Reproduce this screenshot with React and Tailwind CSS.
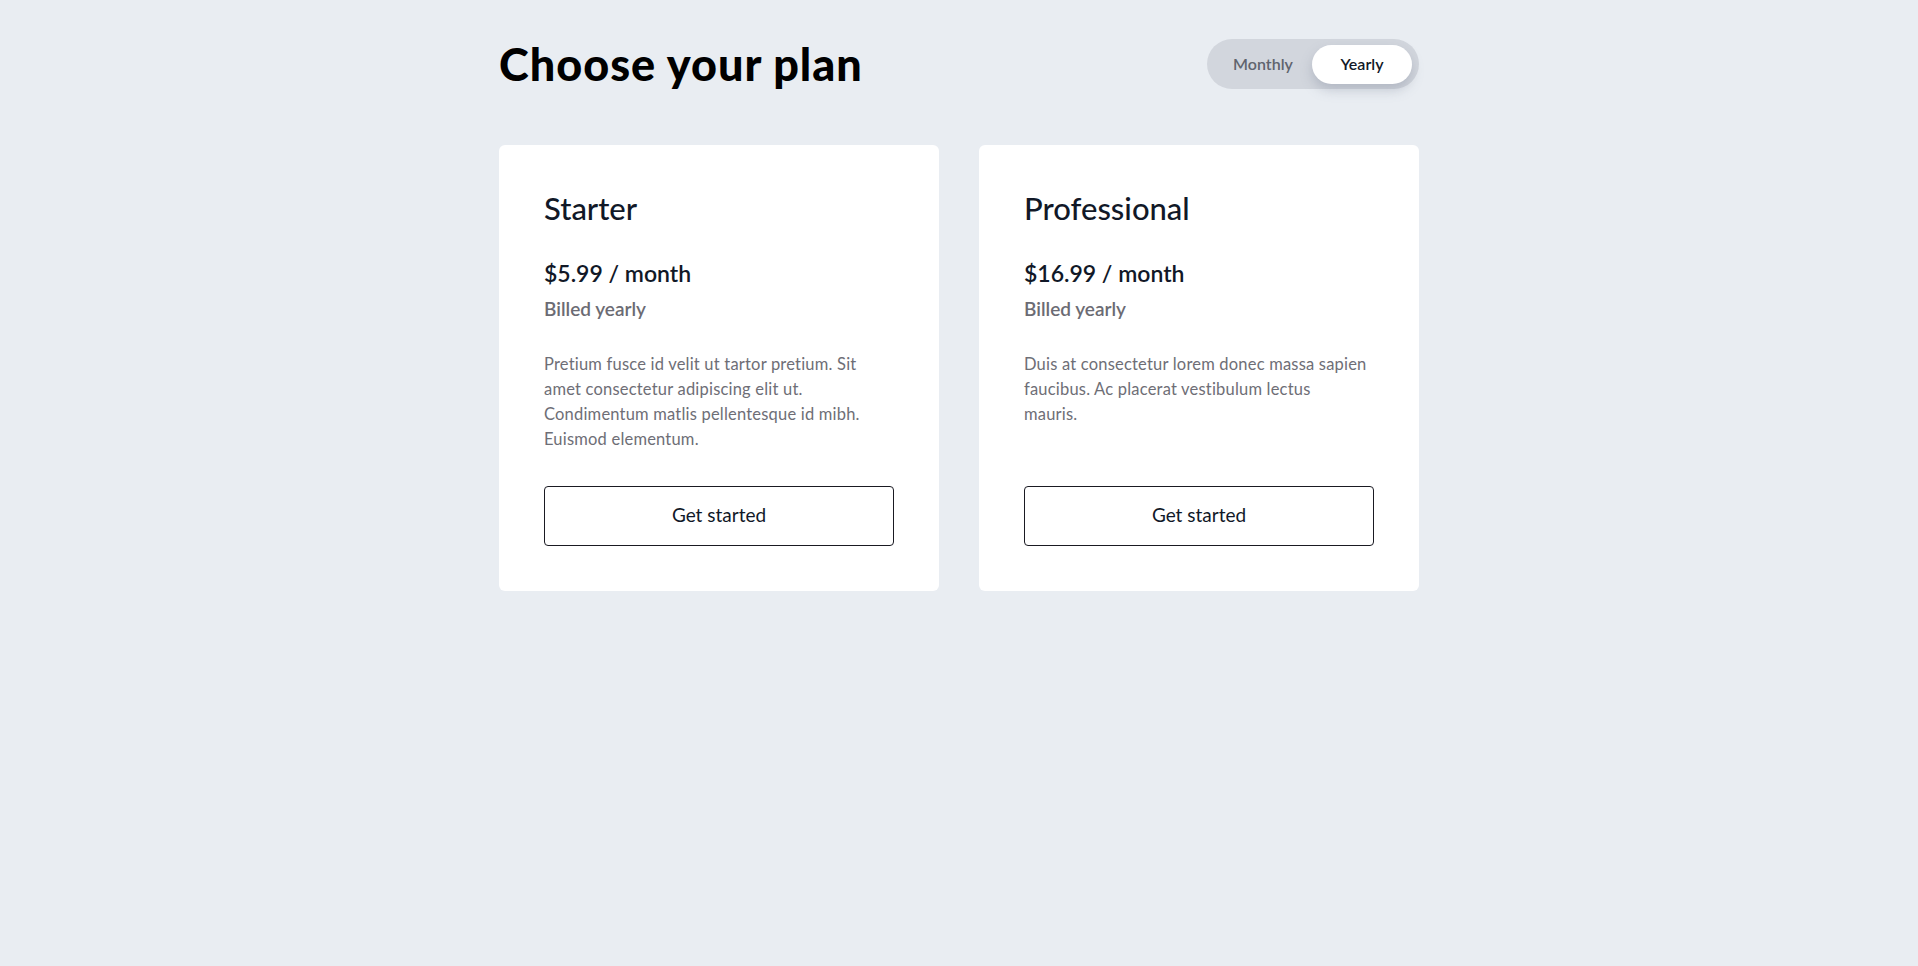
export default function App() {
  const plans = [
    {
      name: "Starter",
      price: "$5.99 / month",
      lines: [
        "Pretium fusce id velit ut tartor pretium. Sit",
        "amet consectetur adipiscing elit ut.",
        "Condimentum matlis pellentesque id mibh.",
        "Euismod elementum.",
      ],
    },
    {
      name: "Professional",
      price: "$16.99 / month",
      lines: [
        "Duis at consectetur lorem donec massa sapien",
        "faucibus. Ac placerat vestibulum lectus",
        "mauris.",
      ],
    },
  ];
  return (
    <div className="min-h-screen bg-[#e9edf2] font-['Lato','Open_Sans',sans-serif]">
      <div className="mx-auto w-[920px] pt-[39px]">
        <div className="flex h-[50px] items-center justify-between">
          <h1 className="text-[45px] font-black leading-[1.2] tracking-[1px] text-black">Choose your plan</h1>
          <div className="flex h-[50px] w-[212px] items-center rounded-full bg-[#d2d6dd] px-[7px]">
            <button className="flex-1 text-center text-[16px] font-semibold text-[#60646e]">Monthly</button>
            <button className="h-[39px] w-[100px] rounded-full bg-white text-[16px] font-semibold text-[#111827] shadow-[0_6px_12px_rgba(120,130,150,0.35)]">
              Yearly
            </button>
          </div>
        </div>
        <div className="mt-[56px] grid grid-cols-2 gap-10">
          {plans.map((p) => (
            <div key={p.name} className="flex flex-col rounded-md bg-white px-[45px] pb-[45px] pt-[45px]">
              <h2 className="text-[31px] font-medium leading-[1.2] text-[#111827]">{p.name}</h2>
              <div className="mt-[33px] text-[23px] font-semibold leading-[1.2] text-[#111827]">{p.price}</div>
              <div className="mt-[10px] text-[19px] font-semibold leading-[1.2] text-[#6b6b73]">Billed yearly</div>
              <p className="mt-[31px] flex-1 text-[16.5px] leading-[25px] tracking-[0.2px] text-[#6e6e76]">
                {p.lines.map((l, i) => (
                  <span key={i} className="block">{l}</span>
                ))}
              </p>
              <button className="mt-[34px] h-[60px] w-full rounded-[4px] border border-[#1a1a22] text-[19px] text-[#111827]">
                Get started
              </button>
            </div>
          ))}
        </div>
      </div>
    </div>
  );
}
